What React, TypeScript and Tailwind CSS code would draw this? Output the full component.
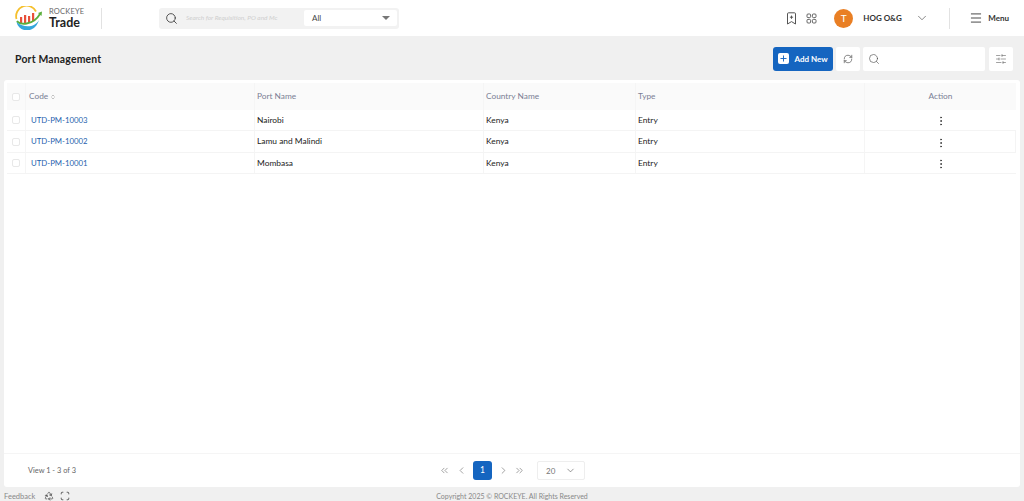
import React from "react";
import { Search, ChevronDown, ChevronLeft, ChevronRight, ChevronsLeft, ChevronsRight, RefreshCw, SlidersHorizontal, Menu, MoreVertical, Plus, Recycle, Scan, ChevronsUpDown } from "lucide-react";

const font = { fontFamily: "Lato, 'Noto Sans', sans-serif" };
const rows = [
  ["UTD-PM-10003", "Nairobi"],
  ["UTD-PM-10002", "Lamu and Malindi"],
  ["UTD-PM-10001", "Mombasa"],
];

function Logo() {
  return (
    <svg width="28" height="24" viewBox="0 0 28 24" fill="none">
      <path d="M1.5 13 A10.5 10.5 0 0 1 21 5.5" stroke="#f5c02e" strokeWidth="1.8" fill="none" />
      <rect x="5" y="11" width="2.2" height="6" fill="#e8503a" />
      <rect x="9" y="9" width="2.2" height="8" fill="#e8503a" />
      <rect x="13" y="10" width="2.2" height="7" fill="#e8503a" />
      <rect x="17" y="7" width="2.2" height="8" fill="#e8503a" />
      <path d="M2 15 C4 19 18 20 25 8" stroke="#5aaf3c" strokeWidth="1.8" fill="none" />
      <path d="M23 7 L27 5.5 L26.5 10 Z" fill="#5aaf3c" />
      <path d="M1.5 16 C4 27 20 28 24 14 C20 21 10 23 1.5 16 Z" fill="#35a7dc" />
    </svg>
  );
}

function BookmarkPlus() {
  return (
    <svg width="11" height="13" viewBox="0 0 11 13" fill="none" stroke="#555" strokeWidth="1">
      <path d="M1.5 1.8 Q1.5 .8 2.5 .8 H8.5 Q9.5 .8 9.5 1.8 V12 L5.5 9.6 L1.5 12 Z" strokeLinejoin="round" />
      <path d="M5.5 3.6 V6.8 M3.9 5.2 H7.1" />
    </svg>
  );
}

function Grid4() {
  return (
    <svg width="11" height="11" viewBox="0 0 11 11" fill="none" stroke="#555" strokeWidth="0.9">
      <rect x="1" y="1" width="3.6" height="3.6" rx="1" />
      <rect x="6.4" y="1" width="3.6" height="3.6" rx="1" />
      <rect x="1" y="6.4" width="3.6" height="3.6" rx="1" />
      <rect x="6.4" y="6.4" width="3.6" height="3.6" rx="1" />
    </svg>
  );
}

function Check() {
  return <span className="block w-[8px] h-[8px] rounded-[2px] border border-[#e8e8e8] bg-white" />;
}

function Cell({ className = "", children }: { className?: string; children?: React.ReactNode }) {
  return <div className={`flex items-center shrink-0 border-l border-[#f5f5f5] ${className}`}>{children}</div>;
}

export default function App() {
  return (
    <div style={font} className="w-[1024px] h-[501px] overflow-hidden bg-[#f0f0f0] flex flex-col text-[#222]">
      <header className="h-[36px] bg-white flex items-center shrink-0">
        <div className="w-[15px]" />
        <Logo />
        <div className="ml-[6px] w-[51px] flex flex-col">
          <span className="h-[9px] leading-[9px] text-[7.5px] text-[#666] tracking-[0.2px]">ROCKEYE</span>
          <span className="h-[13px] leading-[13px] text-[12.5px] font-bold text-[#222]">Trade</span>
        </div>
        <div className="w-px h-[21px] bg-[#e2e2e2] ml-[1px]" />
        <div className="ml-[57px] w-[240px] h-[21px] rounded-[3px] bg-[#f2f2f2] flex items-center">
          <Search size={13} strokeWidth={1.5} className="ml-[6px] text-[#333]" />
          <span className="ml-[8px] w-[118px] text-[6.5px] italic text-[#cfcfcf] whitespace-nowrap overflow-hidden">Search for Requisition, PO and Mc</span>
          <div className="w-[93px] h-[16px] bg-white rounded-[2px] flex items-center justify-between px-[8px]">
            <span className="text-[8px] text-[#444]">All</span>
            <span className="w-0 h-0 border-l-[4px] border-r-[4px] border-t-[4px] border-l-transparent border-r-transparent border-t-[#777] mr-[-1px]" />
          </div>
        </div>
        <div className="ml-auto flex items-center">
          <BookmarkPlus />
          <span className="ml-[9px]"><Grid4 /></span>
          <span className="ml-[17px] w-[19px] h-[19px] rounded-full bg-[#e97f24] text-white text-[10px] flex items-center justify-center">T</span>
          <span className="ml-[10px] text-[8px] font-bold text-[#333] w-[44px] whitespace-nowrap">HOG O&amp;G</span>
          <ChevronDown size={14} strokeWidth={1} className="ml-[8px] text-[#333]" />
          <div className="ml-[20px] w-px h-[21px] bg-[#e2e2e2]" />
          <Menu size={14} strokeWidth={1.4} className="ml-[19px] text-[#222]" />
          <span className="ml-[5px] mr-[15px] text-[8px] font-bold text-[#333]">Menu</span>
        </div>
      </header>

      <div className="h-[44px] shrink-0 flex items-center pr-[11px] pl-[15px] pt-[1px]">
        <h1 className="mt-[2px] text-[10.4px] font-bold text-[#222] tracking-[0.2px]">Port Management</h1>
        <div className="ml-auto flex items-center">
          <button className="w-[60px] h-[24px] rounded-[3px] bg-[#1565c0] text-white flex items-center justify-center">
            <span className="w-[11px] h-[11px] rounded-[2px] bg-white flex items-center justify-center mr-[5px]">
              <Plus size={9} strokeWidth={2.5} className="text-[#1565c0]" />
            </span>
            <span className="text-[8px] font-bold whitespace-nowrap">Add New</span>
          </button>
          <span className="ml-[3px] w-[24px] h-[24px] bg-white rounded-[2px] flex items-center justify-center">
            <RefreshCw size={10} strokeWidth={1.5} className="text-[#444]" />
          </span>
          <span className="ml-[3px] w-[122px] h-[24px] bg-white rounded-[2px] flex items-center pl-[5px]">
            <Search size={12} strokeWidth={1.2} className="text-[#444]" />
          </span>
          <span className="ml-[4px] w-[24px] h-[24px] bg-white rounded-[2px] flex items-center justify-center">
            <SlidersHorizontal size={12} strokeWidth={1} className="text-[#444]" />
          </span>
        </div>
      </div>

      <main className="mx-[4px] w-[1016px] h-[407px] shrink-0 bg-white rounded-[3px] pt-[3px] flex flex-col">
        <div className="mx-[3px] w-[1009px] flex-1">
          <div className="flex h-[27px] bg-[#fafafa] text-[8.3px] text-[#7b7f95]">
            <div className="w-[18px] shrink-0 flex items-center justify-center"><Check /></div>
            <Cell className="w-[229px] pl-[3px]">Code <ChevronsUpDown size={6} className="ml-[2px] text-[#888]" /></Cell>
            <Cell className="w-[229px] pl-[2px]">Port Name</Cell>
            <Cell className="w-[152px] pl-[2px]">Country Name</Cell>
            <Cell className="w-[229px] pl-[2px]">Type</Cell>
            <Cell className="w-[152px] justify-center">Action</Cell>
          </div>
          {rows.map((r, i) => (
            <div key={r[0]} className={`flex h-[21.4px] text-[8.4px] text-[#222] border-b border-[#f4f4f4] ${i === 1 ? "border-r" : ""}`}>
              <div className="w-[18px] shrink-0 flex items-center justify-center"><Check /></div>
              <Cell className="w-[229px] pl-[5px] pt-[1px] text-[#1f5fae] text-[7.8px]">{r[0]}</Cell>
              <Cell className="w-[229px] pl-[2px]">{r[1]}</Cell>
              <Cell className="w-[152px] pl-[2px]">Kenya</Cell>
              <Cell className="w-[229px] pl-[2px]">Entry</Cell>
              <Cell className="w-[152px] justify-center"><MoreVertical size={12} strokeWidth={2} className="text-[#444] mt-[2px]" /></Cell>
            </div>
          ))}
        </div>
        <div className="h-[34px] shrink-0 border-t border-[#f5f5f5] relative flex items-center justify-center">
          <span className="absolute left-[24px] text-[7.4px] text-[#666]">View 1 - 3 of 3</span>
          <ChevronsLeft size={11} strokeWidth={1.3} className="text-[#666]" />
          <ChevronLeft size={11} strokeWidth={1.3} className="ml-[6px] text-[#666]" />
          <span className="ml-[6px] w-[19px] h-[19px] rounded-[3px] bg-[#1565c0] text-white text-[8.5px] flex items-center justify-center">1</span>
          <ChevronRight size={11} strokeWidth={1.3} className="ml-[6px] text-[#666]" />
          <ChevronsRight size={11} strokeWidth={1.3} className="ml-[5px] text-[#666]" />
          <span className="ml-[12px] w-[48px] h-[19px] rounded-[2px] border border-[#eee] flex items-center justify-between px-[8px] text-[8px] text-[#777]">
            20 <ChevronDown size={11} strokeWidth={1.2} className="text-[#444]" />
          </span>
        </div>
      </main>

      <footer className="flex-1 relative flex items-center justify-center text-[7px] leading-[9px] text-[#888] pt-[4px]">
        <div className="absolute left-[4px] top-[4px] flex items-center text-[7.5px]">
          <span>Feedback</span>
          <Recycle size={10} strokeWidth={1.6} className="ml-[9px] text-[#333]" />
          <Scan size={10} strokeWidth={1.8} className="ml-[6px] text-[#333]" />
        </div>
        <span>Copyright 2025 © ROCKEYE. All Rights Reserved</span>
      </footer>
    </div>
  );
}
